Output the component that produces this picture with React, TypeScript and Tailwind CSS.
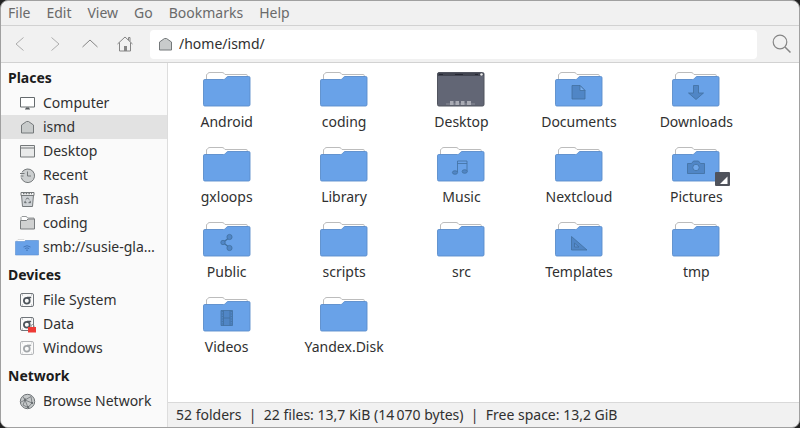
import React, { useState } from 'react';

const FOLDERS = [
  'Android', 'coding', 'Desktop', 'Documents', 'Downloads',
  'gxloops', 'Library', 'Music', 'Nextcloud', 'Pictures',
  'Public', 'scripts', 'src', 'Templates', 'tmp',
  'Videos', 'Yandex.Disk',
];

const SECTIONS = [
  {
    title: 'Places',
    items: [
      { name: 'Computer', icon: 'computer' },
      { name: 'ismd', icon: 'home' },
      { name: 'Desktop', icon: 'window' },
      { name: 'Recent', icon: 'recent' },
      { name: 'Trash', icon: 'trash' },
      { name: 'coding', icon: 'folder' },
      { name: 'smb://susie-gla…', icon: 'remote' },
    ],
  },
  {
    title: 'Devices',
    items: [
      { name: 'File System', icon: 'drive' },
      { name: 'Data', icon: 'locked' },
      { name: 'Windows', icon: 'unmounted' },
    ],
  },
  {
    title: 'Network',
    items: [{ name: 'Browse Network', icon: 'network' }],
  },
];

function HomeShape() {
  return <path d="M2.500 6 7.500 2.500h2l5 3.500v8h-12z" fill="#c8cbcb" stroke="#74787a" />;
}

function Drive() {
  return (
    <>
      <rect x="1.500" y="1.500" width="13" height="13" rx="1.500" fill="#fafafa" stroke="#70757a" />
      <path d="M3 3h1M12 3h1M3 13h1M12 13h1" stroke="#9a9ea2" />
      <circle cx="7.800" cy="8.700" r="2.900" fill="none" stroke="#4d545b" strokeWidth="1.800" />
      <path d="M8 5.400h4.200" stroke="#4d545b" strokeWidth="1.500" />
    </>
  );
}

// Small icons of the side pane
function PlaceIcon({ icon }: { icon: string }) {
  if (icon === 'remote') {
    return (
      <svg width="24" height="18" viewBox="0 0 24 18">
        <path d="M2 5V2.500l1-1h6l1 1h12V5" fill="#fff" stroke="#ccc" strokeWidth=".7" />
        <path d="M.5 3.500h9l1-1h13v14.500H.5z" fill="#68a1e8" stroke="#5a8fd2" strokeWidth=".6" />
        <path d="M8.500 9q3.500-2.600 7 0M9.800 10.600q2.200-1.500 4.400 0M11 12.200h2" fill="none" stroke="#3f73b5" strokeWidth=".9" />
      </svg>
    );
  }
  return (
    <svg width="17" height="17" viewBox="0 0 17 17">
      {icon === 'computer' && (
        <>
          <path d="M1.500 2.500h14v9.500h-14z" fill="#fff" stroke="#656a6d" />
          <path d="M7 12.500h3v1h1v1H6v-1h1z" fill="#54595c" />
        </>
      )}
      {icon === 'home' && <HomeShape />}
      {icon === 'window' && (
        <>
          <path d="M1.500 2.500h14v11.500h-14z" fill="#e9eaea" stroke="#74787a" />
          <path d="M1.500 5h14" stroke="#74787a" />
        </>
      )}
      {icon === 'recent' && (
        <>
          <circle cx="8.700" cy="8.500" r="6.800" fill="#cccfd0" />
          <path d="M3 5.200A6.800 6.800 0 1 1 2.200 10.500M1 6.500h4.500M1.500 9h3" fill="none" stroke="#74787a" />
          <path d="M8.500 4.500v4.500h3.500" fill="none" stroke="#74787a" />
        </>
      )}
      {icon === 'trash' && (
        <>
          <path d="M2.500 4h12l-1 11.500h-10z" fill="#ced2d5" stroke="#74787a" />
          <path d="M2 1.500h13v3H2z" fill="#f4f4f4" stroke="#74787a" />
          <path d="M4 2.500h9" stroke="#74787a" strokeWidth="1.400" strokeDasharray="1.500 1.200" />
          <path d="m7 8.500 1.500-1.700L10 8.500M11 9.800l.5 1.900H9.500M7.500 11.700H5.600l.8-1.900" fill="none" stroke="#5f6467" />
        </>
      )}
      {icon === 'folder' && (
        <>
          <path d="M2 5V2.500L3 1.500h4.500l1 1.500h6.500v3" fill="#fff" stroke="#8b8e90" strokeWidth=".9" />
          <path d="M1.500 5.500h6l1.500-1.500h6.500V14h-14z" fill="#d0d1d1" stroke="#787b7d" />
        </>
      )}
      {icon === 'drive' && <Drive />}
      {icon === 'locked' && (
        <>
          <Drive />
          <path d="M12 11V9.500q1.500-2 3 0V11" fill="none" stroke="#888" />
          <path d="M9 11h8v5.500H9z" fill="#ee3a35" />
        </>
      )}
      {icon === 'unmounted' && <g opacity=".5"><Drive /></g>}
      {icon === 'network' && (
        <>
          <circle cx="8.500" cy="8.500" r="7.200" fill="#c6c9ca" stroke="#6d7275" />
          <path d="M4 3.500 6 7l6-3.500L13 10l-7-3-2 5 5 2.500L13 10M6 7l3 7.500M2 9l4-2" fill="none" stroke="#6b7073" strokeWidth=".8" />
          <path d="M5 5.500h2v2.500H5zM12 9h2v2h-2zM8 13h2v2H8z" fill="#6b7073" />
        </>
      )}
    </svg>
  );
}

// Emblem printed on the front of the standard user folders
function Emblem({ name }: { name: string }) {
  return (
    <g fill="#5086c6" stroke="#41709f" strokeWidth=".8">
      {name === 'Documents' && (
        <>
          <path d="M17 13.500h8l5 5v8.500H17z" />
          <path d="M25 13.500v5h5z" fill="#78aeee" />
        </>
      )}
      {name === 'Downloads' && <path d="M21.500 13.500h5v7.500h5L24 27.500 16.500 21h5z" />}
      {name === 'Music' && (
        <>
          <path d="M20.500 25V14h9.500v10.500M20.500 16.500H30" fill="none" />
          <ellipse cx="18" cy="25.500" rx="2.600" ry="1.800" />
          <ellipse cx="27.700" cy="24.500" rx="2.600" ry="1.800" />
        </>
      )}
      {name === 'Pictures' && (
        <>
          <path d="M15.500 16.500h4l2-2.500h5l2 2.500h4v10h-17z" />
          <circle cx="24" cy="20.500" r="3.200" fill="#6fa7ea" />
        </>
      )}
      {name === 'Public' && (
        <>
          <path d="m27 15-7 5.500 7 5.500" fill="none" strokeWidth="1.300" />
          <circle cx="26.500" cy="15" r="2.600" />
          <circle cx="20" cy="20.500" r="2.200" />
          <circle cx="26.500" cy="26" r="2.600" />
        </>
      )}
      {name === 'Templates' && (
        <>
          <path d="M16.500 14.500v13.500H32z" />
          <path d="M19.500 21v4h4.500z" fill="#5b92d8" />
        </>
      )}
      {name === 'Videos' && (
        <>
          <path d="M18 13.500h11.500v15H18z" />
          <path d="M20.500 13.500v15M27 13.500v15M20.500 21H27" fill="none" />
          <path d="M19.300 14v15M28.300 14v15" strokeDasharray="1 1.500" />
        </>
      )}
    </g>
  );
}

function FolderIcon({ name }: { name: string }) {
  if (name === 'Desktop') {
    return (
      <svg width="48" height="35" viewBox="0 0 48 35">
        <rect x=".5" y=".5" width="46.500" height="33.500" rx="1.500" fill="#626675" stroke="#51545f" />
        <path d="M1 1h45.500v3H1z" fill="#414450" />
        <path d="M2 2.500h4M18 2.500h8M38 2.500h3" stroke="#252733" />
        <circle cx="44.500" cy="2.500" r="1.300" fill="#eee" />
        <path d="M9 32h29" stroke="#8b8e99" />
        <path d="M13 29h3.500v4H13zM18.500 29H22v4h-3.500zM24 29h3.500v4H24zM30 29h4v4h-4z" fill="#a9abb4" />
      </svg>
    );
  }
  return (
    <svg width="48" height="35" viewBox="0 0 48 35">
      <path d="M3.500 9V3q0-.7.700-.7L5 1.200Q5.500.5 7 .5h12q1.200 0 2 .8l1 1.200h21.500q.7 0 .7.700V7" fill="#fff" stroke="#b4b4b4" strokeWidth=".9" />
      <path d="M.5 8.800q0-1.300 1.300-1.300h18.700q1.200 0 2-1l1-1.200q.7-.8 1.500-.8h20.700q1.300 0 1.300 1.300V32.500q0 1.500-1.300 1.500H1.800Q.5 34 .5 32.500z" fill="#69a2e8" stroke="#5a8ccb" strokeWidth=".9" />
      <Emblem name={name} />
    </svg>
  );
}

export default function App() {
  const [place, setPlace] = useState('home');
  const [path, setPath] = useState('/home/ismd/');

  return (
    <div className="bg-[#222222]">
      <div className="flex min-h-screen flex-col overflow-hidden rounded-lg border border-[#a0a0a0] bg-[#f1f1f1] font-['Noto_Sans',sans-serif] text-sm leading-5 text-[#303030]">
        <nav className="flex h-[25px] items-center border-b border-[#d2d2d2] text-[#6a6a6a]">
          {['File', 'Edit', 'View', 'Go', 'Bookmarks', 'Help'].map((menu) => (
            <button key={menu} type="button" className="pr-[9px] pl-[7px]">{menu}</button>
          ))}
        </nav>

        <header className="flex h-[37px] items-center border-b border-[#d2d2d2] pr-1.5 pl-px">
          <button type="button" aria-label="Back" className="w-[35px]">
            <svg className="mx-auto" width="18" height="18" fill="none" stroke="#adadad"><path d="M12.500 2.500 5 9l7.500 6.500" /></svg>
          </button>
          <button type="button" aria-label="Forward" className="w-[35px]">
            <svg className="mx-auto" width="18" height="18" fill="none" stroke="#adadad"><path d="M5.500 2.500 13 9l-7.500 6.500" /></svg>
          </button>
          <button type="button" aria-label="Up" className="w-[35px]">
            <svg className="mx-auto" width="18" height="18" fill="none" stroke="#858585"><path d="m1.500 12 7.500-7 7.500 7" /></svg>
          </button>
          <button type="button" aria-label="Home" className="w-[35px]">
            <svg className="mx-auto" width="18" height="18" fill="none" stroke="#858585">
              <path d="M1.500 9 9 2l7.500 7M3.500 7.500v8.500h11V7.500M12.500 5V2.500h1.500v4" />
              <path d="M8 11h3v5H8z" fill="#858585" stroke="none" />
            </svg>
          </button>
          <label className="ml-2 flex h-[29px] min-w-0 flex-1 items-center gap-[5px] rounded bg-white px-[7px]">
            <svg width="17" height="17" aria-hidden="true"><HomeShape /></svg>
            <input
              aria-label="Location"
              value={path}
              onChange={(e) => setPath(e.target.value)}
              className="min-w-0 flex-1 bg-transparent outline-none"
            />
          </label>
          <button type="button" aria-label="Search" className="ml-3.5">
            <svg width="22" height="22" fill="none" stroke="#858585" strokeWidth="1.200">
              <circle cx="9" cy="9" r="6.800" />
              <path d="m14 14 5.500 5.500" strokeWidth="1.500" />
            </svg>
          </button>
        </header>

        <div className="flex flex-1">
          <aside className="w-[167px] shrink-0 border-r border-[#dddddd] bg-[#fafafa] pt-px">
            {SECTIONS.map((section) => (
              <section key={section.title} className="mb-0.5">
                <h2 className="flex h-[27px] items-center pl-[7px] font-bold text-[#1c1c1c]">{section.title}</h2>
                {section.items.map((item) => (
                  <button
                    key={item.icon}
                    type="button"
                    onClick={() => setPlace(item.icon)}
                    className={
                      place === item.icon
                        ? 'flex h-6 w-full items-center bg-[#e2e2e2] pl-3.5 text-left'
                        : 'flex h-6 w-full items-center pl-3.5 text-left'
                    }
                  >
                    <span className="mr-1 flex w-6 justify-center"><PlaceIcon icon={item.icon} /></span>
                    <span className="whitespace-nowrap">{item.name}</span>
                  </button>
                ))}
              </section>
            ))}
          </aside>

          <div className="flex min-w-0 flex-1 flex-col">
            <main className="grid flex-1 auto-rows-[75px] grid-cols-5 bg-white pt-[9px] pr-11">
              {FOLDERS.map((name) => (
                <button key={name} type="button" className="flex flex-col items-center gap-[5px]">
                  <span className="relative">
                    <FolderIcon name={name} />
                    {name === 'Pictures' && (
                      <svg className="absolute -right-2.5 -bottom-1" width="15" height="14">
                        <rect width="15" height="14" rx="1" fill="#50535c" />
                        <path d="M12.500 4.500V12H5z" fill="#fff" />
                      </svg>
                    )}
                  </span>
                  <span>{name}</span>
                </button>
              ))}
            </main>
            <footer className="flex h-[25px] items-center border-t border-[#d9d9d9] px-2 whitespace-pre">
              52 folders  |  22 files: 13,7 KiB (14{'\u202f'}070 bytes)  |  Free space: 13,2 GiB
            </footer>
          </div>
        </div>
      </div>
    </div>
  );
}
